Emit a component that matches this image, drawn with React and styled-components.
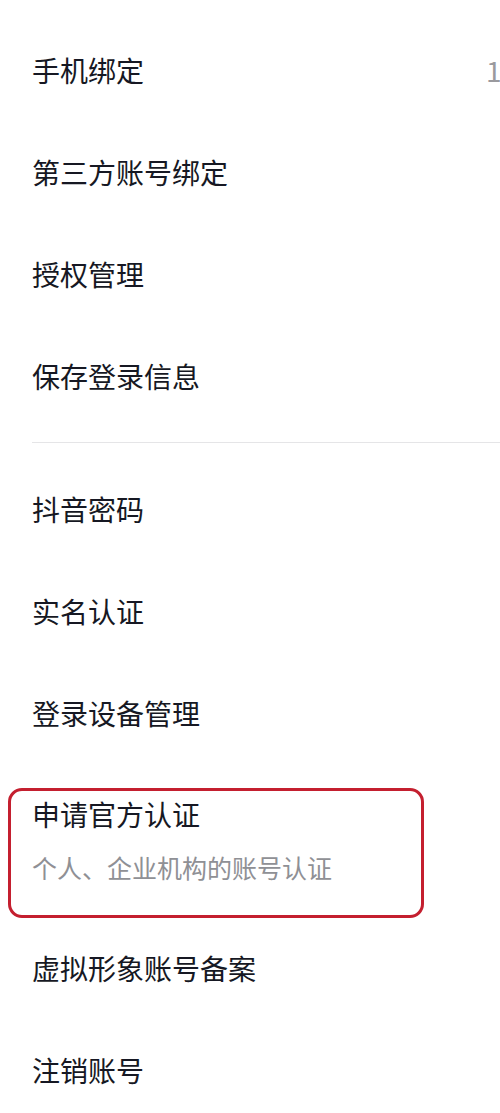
import React from "react";
import styled, { createGlobalStyle } from "styled-components";

const GlobalStyle = createGlobalStyle`
    html, body {
        margin: 0;
        padding: 0;
        background: #ffffff;
        overflow: hidden;
    }
    body {
        font-family: "Noto Sans CJK SC", "Noto Sans", sans-serif;
        color: #161823;
    }
`;

const Page = styled.div`
    width: 500px;
    min-height: 1113px;
    overflow: hidden;
    padding-top: 19px;
`;

const Group = styled.div`
    display: flex;
    flex-direction: column;
`;

const Divider = styled.div`
    height: 1px;
    margin: 15px 0 15px 32px;
    background: #e5e5e7;
`;

const Row = styled.div`
    position: relative;
    display: flex;
    align-items: center;
    height: ${(p) => (p.tall ? "153px" : "102px")};
    padding-left: 32px;
    box-sizing: border-box;
`;

const TextBlock = styled.div`
    display: flex;
    flex-direction: column;
    flex: 0 0 454px;
`;

const Title = styled.div`
    font-size: 28px;
    line-height: 30px;
    color: #161823;
    white-space: nowrap;
`;

const Sub = styled.div`
    margin-top: 23px;
    font-size: 25px;
    line-height: 30px;
    color: #8f9095;
    white-space: nowrap;
`;

const Value = styled.div`
    font-size: 28px;
    line-height: 30px;
    color: #9a9a9e;
    white-space: nowrap;
`;

/* 截图上的红色标注框 */
const Highlight = styled.div`
    position: absolute;
    left: 8px;
    top: 24px;
    width: 416px;
    height: 130px;
    box-sizing: border-box;
    border: 3px solid #c41f2f;
    border-radius: 14px;
    pointer-events: none;
`;

const Item = ({ title, sub, value, marked }) => (
    <Row tall={!!sub}>
        <TextBlock>
            <Title>{title}</Title>
            {sub && <Sub>{sub}</Sub>}
        </TextBlock>
        {value && <Value>{value}</Value>}
        {marked && <Highlight />}
    </Row>
);

const App = () => {
    return (
        <>
            <GlobalStyle />
            <Page>
                <Group>
                    <Item title="手机绑定" value="138******66" />
                    <Item title="第三方账号绑定" />
                    <Item title="授权管理" />
                    <Item title="保存登录信息" />
                </Group>
                <Divider />
                <Group>
                    <Item title="抖音密码" />
                    <Item title="实名认证" />
                    <Item title="登录设备管理" />
                    <Item title="申请官方认证" sub="个人、企业机构的账号认证" marked />
                    <Item title="虚拟形象账号备案" />
                    <Item title="注销账号" />
                </Group>
            </Page>
        </>
    );
};

export default App;
